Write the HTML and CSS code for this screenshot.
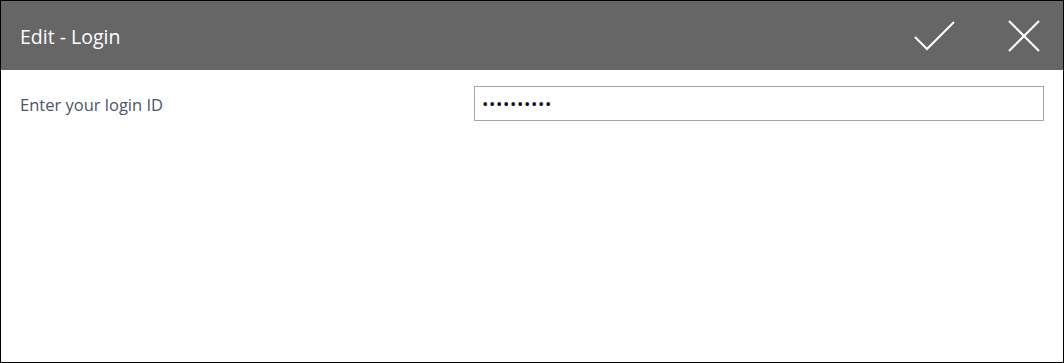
FILE: index.html
```html
<!DOCTYPE html>
<html lang="en">
<head>
    <meta charset="UTF-8">
    <title>Edit - Login</title>
    <link rel="stylesheet" href="styles.css">
</head>
<body>
    <div class="dialog">
        <div class="dialog-header">
            <div class="dialog-title">Edit - Login</div>
            <div class="dialog-actions">
                <svg class="icon-check" width="42" height="30" viewBox="0 0 42 30">
                    <polyline points="1,16 13,28 40,1" fill="none" stroke="#fff" stroke-width="2"/>
                </svg>
                <svg class="icon-close" width="32" height="32" viewBox="0 0 32 32">
                    <path d="M1 1 L31 31 M31 1 L1 31" fill="none" stroke="#fff" stroke-width="2.2"/>
                </svg>
            </div>
        </div>
        <div class="dialog-body">
            <div class="field-row">
                <label class="field-label">Enter your login ID</label>
                <div class="field-input">••••••••••</div>
            </div>
        </div>
    </div>
</body>
</html>
```

FILE: styles.css
```css
* {
    box-sizing: border-box;
}

body {
    margin: 0;
    background: #fff;
    font-family: "Open Sans", "Noto Sans", sans-serif;
}

.dialog {
    width: 1064px;
    height: 363px;
    border: 1px solid #000;
    display: flex;
    flex-direction: column;
}

.dialog-header {
    height: 69px;
    background: #666;
    display: flex;
    align-items: center;
    justify-content: space-between;
    padding: 0 23px 0 19px;
}

.dialog-title {
    color: #fff;
    font-size: 19.5px;
    margin-top: 1px;
}

.dialog-actions {
    display: flex;
    align-items: center;
    gap: 52px;
    margin-top: 1px;
}

.dialog-body {
    flex: 1;
    padding: 16px 19px 0 19px;
}

.field-row {
    display: grid;
    grid-template-columns: 454px 1fr;
    align-items: center;
}

.field-label {
    color: #4a5567;
    font-size: 16.5px;
    margin-top: 2px;
}

.field-input {
    height: 35px;
    border: 1px solid #a6a6a6;
    padding: 0 7px;
    display: flex;
    align-items: center;
    color: #111;
    font-size: 17px;
    letter-spacing: 0.6px;
}
```
